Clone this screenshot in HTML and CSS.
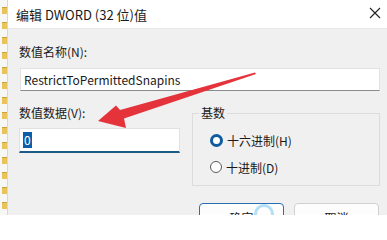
FILE: index.html
```html
<!DOCTYPE html>
<html lang="zh">
<head>
<meta charset="utf-8">
<link rel="stylesheet" href="styles.css">
</head>
<body>
<div class="page">
  <div class="tree">
    <span class="fold"></span><span class="fold"></span><span class="fold"></span><span class="fold"></span><span class="fold"></span><span class="fold"></span><span class="fold"></span><span class="fold"></span><span class="fold"></span><span class="fold"></span><span class="fold"></span><span class="fold"></span><span class="fold"></span><span class="fold"></span><span class="fold"></span>
  </div>
  <div class="dialog">
    <div class="titlebar">
      <span class="title">编辑 DWORD (32 位)值</span>
      <svg class="close" width="12" height="12" viewBox="0 0 12 12"><path d="M1 1L11 11M11 1L1 11" stroke="#222" stroke-width="1.1" fill="none"/></svg>
    </div>
    <div class="body">
      <div class="label">数值名称(N):</div>
      <div class="field name">RestrictToPermittedSnapins</div>
      <div class="row">
        <div class="left">
          <div class="label">数值数据(V):</div>
          <div class="field data"><span class="sel">0</span></div>
        </div>
        <fieldset class="group">
          <legend>基数</legend>
          <div class="radio"><span class="dot on"></span>十六进制(H)</div>
          <div class="radio"><span class="dot"></span>十进制(D)</div>
        </fieldset>
      </div>
      <div class="buttons">
        <div class="btn primary">确定</div>
        <div class="btn">取消</div>
      </div>
    </div>
  </div>
  <svg class="arrow" width="387" height="215" viewBox="0 0 387 215">
    <polygon points="255,72.5 120,110 116,105.5 98,121 126,128 124,118.5 256,74" fill="#e5333b"/>
  </svg>
  <div class="ring"></div>
</div>
</body>
</html>
```
FILE: styles.css
```css
html, body { margin: 0; padding: 0; }
body { width: 387px; height: 215px; overflow: hidden; font-family: "Noto Sans CJK SC", "Noto Sans", sans-serif; font-size: 12px; color: #1a1a1a; }
.page { position: relative; display: flex; width: 387px; height: 215px; overflow: hidden; }
.tree { width: 8px; flex-shrink: 0; background: #f7f7f5; display: flex; flex-direction: column; gap: 8px; padding-top: 7px; box-sizing: border-box; border-right: 1px solid #d8d8d8; }
.fold { display: block; flex-shrink: 0; width: 5px; height: 6px; margin-left: 2px; background: #e8c45a; border-top: 1px solid #c9a53a; }
.dialog { flex: 1; display: flex; flex-direction: column; background: #f0f0f0; }
.titlebar { flex-shrink: 0; height: 29px; background: #ffffff; display: flex; align-items: center; justify-content: space-between; padding: 0 6px 0 8px; border-bottom: 1px solid #e8e8e8; box-sizing: border-box; }
.title { font-size: 13px; color: #1a1a1a; padding-top: 1px; }
.close { margin-top: -2px; }
.body { flex-shrink: 0; padding: 15px 7px 0 11px; display: flex; flex-direction: column; }
.label { height: 16px; line-height: 16px; font-size: 12px; }
.field { background: #fff; border: 1px solid #e1e1e1; border-bottom-color: #8b8b8b; box-sizing: border-box; }
.name { margin-top: 8px; margin-left: 1px; height: 23px; line-height: 21px; padding-left: 3px; font-size: 12px; }
.row { display: grid; grid-template-columns: 161px 188px; column-gap: 12px; margin-top: 7px; align-items: start; }
.left { padding-top: 7px; }
.data { margin-top: 7px; height: 25px; border-bottom: 2px solid #1d5b86; padding: 2px 0 0 3px; }
.sel { display: inline-block; background: #0c5ea8; color: #fff; height: 16px; line-height: 16px; padding: 0 1px; font-size: 12px; }
.group { margin: 8px 0 0 0; border: 1px solid #dcdcdc; padding: 0 0 0 17px; height: 80px; box-sizing: border-box; }
.group legend { padding: 0 2px; margin-left: -11px; font-size: 12px; line-height: 14px; }
.radio { display: flex; align-items: center; height: 16px; margin-top: 12px; gap: 4px; font-size: 12px; }
.radio + .radio { margin-top: 11px; }
.dot { width: 10px; height: 10px; border: 1px solid #5a5a5a; border-radius: 50%; background: #fff; }
.dot.on { width: 7px; height: 7px; border: 3px solid #0e5c9e; background: #fff; }
.buttons { display: flex; gap: 10px; margin-top: 17px; margin-left: 180px; }
.btn { width: 85px; height: 30px; background: #fdfdfd; border: 1px solid #d0d0d0; border-radius: 4px; box-sizing: border-box; text-align: center; line-height: 28px; font-size: 12px; }
.btn.primary { border: 1px solid #2a6fb0; }
.arrow { position: absolute; left: 0; top: 0; }
.ring { position: absolute; left: 254px; top: 204px; width: 20px; height: 20px; border-radius: 50%; border: 3px solid rgba(120, 200, 240, 0.55); box-sizing: border-box; }
```
